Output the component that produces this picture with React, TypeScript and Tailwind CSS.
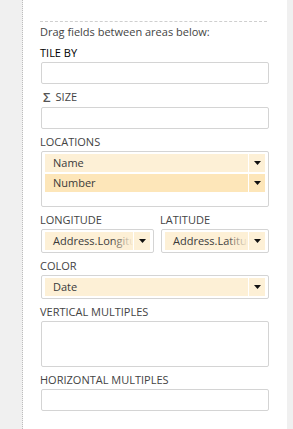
import type { ReactNode } from 'react';

const font = { fontFamily: '"Open Sans", "Noto Sans", sans-serif' };

function Label({ children, dark }: { children: ReactNode; dark?: boolean }) {
    return (
        <div className={`h-[16px] leading-[16px] text-[11px] whitespace-nowrap ${dark ? 'text-black' : 'text-[#444]'}`}>
            {children}
        </div>
    );
}

function Arrow() {
    return (
        <svg width="7" height="4" viewBox="0 0 7 4">
            <path d="M0 0 L7 0 L3.5 4 Z" fill="#111" />
        </svg>
    );
}

function Field({ name, active, fade }: { name: string; active?: boolean; fade?: boolean }) {
    const bg = active ? 'bg-[#fde6b9]' : 'bg-[#fdf0d6]';
    return (
        <div className="flex h-[18px]">
            <div className={`relative flex-1 min-w-0 overflow-hidden pl-[8px] text-[11px] leading-[18px] text-[#3a3a3a] whitespace-nowrap ${bg}`}>
                {name}
                {fade && (
                    <div className="absolute right-0 top-0 h-full w-[22px] bg-gradient-to-r from-[#fdf0d600] to-[#fdf0d6]" />
                )}
            </div>
            <div className={`w-[17px] flex items-center justify-center border-l border-white ${bg}`}>
                <Arrow />
            </div>
        </div>
    );
}

function Box({ h, children }: { h: string; children?: ReactNode }) {
    return (
        <div className={`mt-[1px] ml-[1px] border border-[#d4d4d4] rounded-[2px] bg-white px-[3px] py-[2px] flex flex-col gap-[2px] ${h}`}>
            {children}
        </div>
    );
}

export default function App() {
    return (
        <div className="w-[293px] h-[429px] flex bg-[#f0f0f0] overflow-hidden" style={font}>
            <div className="w-[22px] border-r border-dotted border-[#bdbdbd] box-content" />
            <div className="w-[264px] bg-white pl-[17px] pr-[18px] pt-[21px]">
                <div className="border-t border-dashed border-[#cfcfcf] w-[227px]" />
                <div className="mt-[2px] h-[16px] leading-[16px] text-[11px] text-[#444] whitespace-nowrap">
                    Drag fields between areas below:
                </div>

                <div className="mt-[5px]">
                    <Label dark>TILE BY</Label>
                    <Box h="h-[22px]" />
                </div>

                <div className="mt-[5px]">
                    <div className="h-[17px] flex items-center gap-[5px] text-[11px] text-[#444] pl-[3px]">
                        <span className="text-[13px] leading-none text-[#555] font-semibold">Σ</span>
                        <span>SIZE</span>
                    </div>
                    <div className="mt-[1px] ml-[1px] h-[22px] border border-[#d4d4d4] rounded-[2px]" />
                </div>

                <div className="mt-[5px]">
                    <Label>LOCATIONS</Label>
                    <Box h="h-[56px]">
                        <Field name="Name" />
                        <Field name="Number" active />
                    </Box>
                </div>

                <div className="mt-[5px] flex gap-[6px]">
                    <div className="w-[114px]">
                        <Label>LONGITUDE</Label>
                        <Box h="h-[24px]">
                            <Field name="Address.Longitude" fade />
                        </Box>
                    </div>
                    <div className="w-[109px]">
                        <Label>LATITUDE</Label>
                        <Box h="h-[24px]">
                            <Field name="Address.Latitude" fade />
                        </Box>
                    </div>
                </div>

                <div className="mt-[5px]">
                    <Label>COLOR</Label>
                    <Box h="h-[24px]">
                        <Field name="Date" />
                    </Box>
                </div>

                <div className="mt-[5px]">
                    <Label>VERTICAL MULTIPLES</Label>
                    <Box h="h-[46px]" />
                </div>

                <div className="mt-[5px]">
                    <Label>HORIZONTAL MULTIPLES</Label>
                    <Box h="h-[22px]" />
                </div>
            </div>
        </div>
    );
}
